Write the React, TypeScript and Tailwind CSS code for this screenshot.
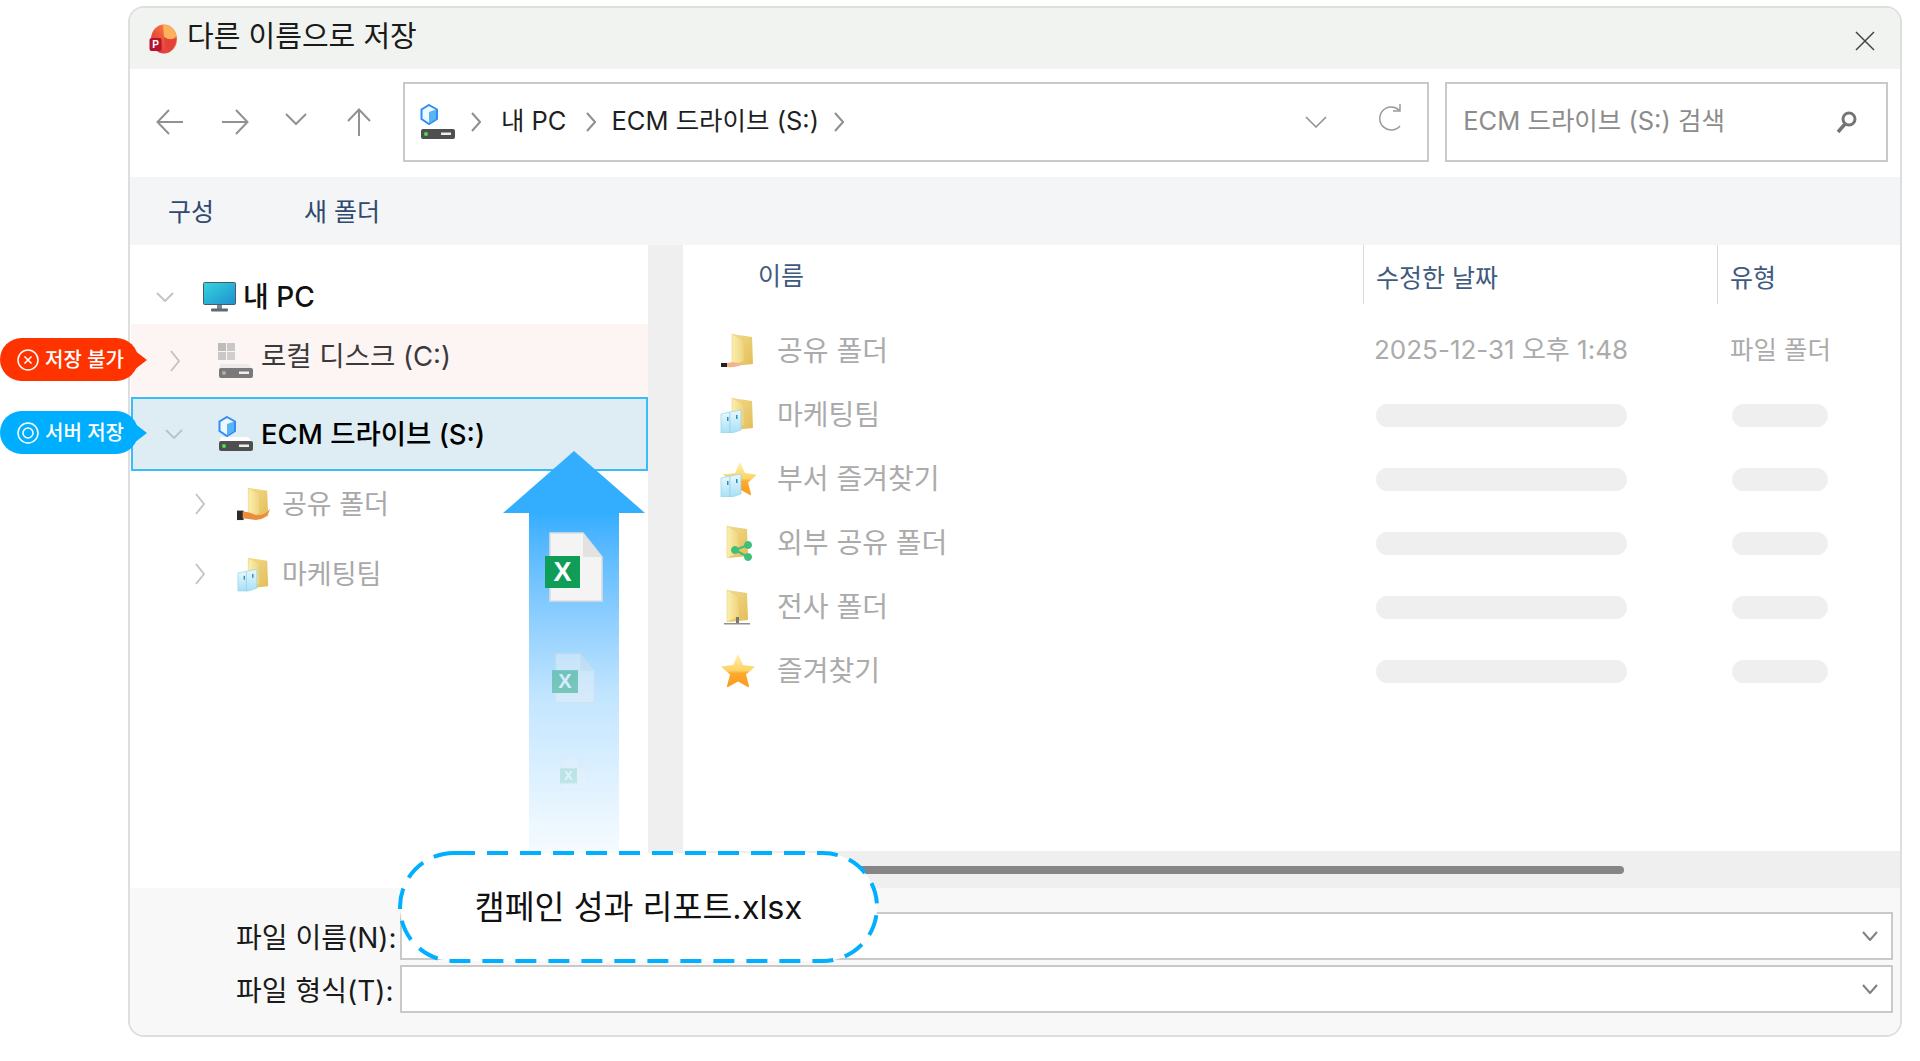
import React from 'react';

const Defs = () => (
  <svg className="absolute w-0 h-0">
    <defs>
      <linearGradient id="folderBack" x1="0" y1="0" x2="1" y2="1">
        <stop offset="0" stopColor="#f3dd8e" />
        <stop offset="1" stopColor="#e2bd57" />
      </linearGradient>
      <linearGradient id="folderFront" x1="0" y1="0" x2="1" y2="0">
        <stop offset="0" stopColor="#fbf0ae" />
        <stop offset="1" stopColor="#efd27c" />
      </linearGradient>
      <linearGradient id="star" x1="0" y1="0" x2="0" y2="1">
        <stop offset="0" stopColor="#fff3b0" />
        <stop offset="0.5" stopColor="#fdd264" />
        <stop offset="0.58" stopColor="#fdaa2e" />
        <stop offset="1" stopColor="#fb9a1c" />
      </linearGradient>
      <linearGradient id="people" x1="0" y1="0" x2="0" y2="1">
        <stop offset="0" stopColor="#eaf8fd" />
        <stop offset="1" stopColor="#a8e0f4" />
      </linearGradient>
      <linearGradient id="screen" x1="0" y1="0" x2="1" y2="1">
        <stop offset="0" stopColor="#34d6dc" />
        <stop offset="1" stopColor="#1f8fd0" />
      </linearGradient>
      <linearGradient id="ppt" x1="1" y1="0" x2="0" y2="1">
        <stop offset="0" stopColor="#fd9a3a" />
        <stop offset="0.5" stopColor="#ee5a3c" />
        <stop offset="1" stopColor="#d9203f" />
      </linearGradient>
    </defs>
  </svg>
);

const Chevron = ({ dir, w, h, color = '#b5b5b5', sw = 2, className = '' }: { dir: 'right' | 'down'; w: number; h: number; color?: string; sw?: number; className?: string }) => (
  <svg width={w} height={h} viewBox={`0 0 ${w} ${h}`} fill="none" className={className}>
    <path
      d={dir === 'right' ? `M1 1 L${w - 1} ${h / 2} L1 ${h - 1}` : `M1 1 L${w / 2} ${h - 1} L${w - 1} 1`}
      stroke={color}
      strokeWidth={sw}
    />
  </svg>
);

const PptLogo = () => (
  <svg width="28" height="30" viewBox="0 0 28 30">
    <ellipse cx="15" cy="15" rx="13" ry="14.500" fill="url(#ppt)" />
    <path d="M14 0.500 Q25 1 27.500 12 L22 16 Q17 15 15 13 Z" fill="#fcb25c" />
    <path d="M15 13 Q20 17 27.500 14 Q27 24 19 28 Q15 20 15 13 Z" fill="#e2413c" />
    <rect x="0.500" y="14" width="12" height="13" rx="2" fill="#b5122e" />
    <text x="6.500" y="24" fontSize="10" fontWeight="700" fill="#fff" textAnchor="middle" fontFamily="Liberation Sans, sans-serif">P</text>
  </svg>
);

const Drive = ({ base, led = '#4ade50' }: { base: string; led?: string }) => (
  <>
    <path d="M3 21 H30 L35 27 H1 Z" fill={base} />
    <rect x="1" y="25" width="34" height="10" rx="2" fill="#4f4f4f" />
    <circle cx="6" cy="30" r="2" fill={led} />
    <rect x="21" y="28.500" width="10" height="2.500" fill="#eee" />
  </>
);

const Hex = () => (
  <>
    <path d="M9 1 L17 5.500 V15 L9 20 L1.500 15 V5.500 Z" fill="#eef8ff" stroke="#2f8df5" strokeWidth="2" />
    <path d="M9 8 L16 5.500 V15 L9 19 Z" fill="#58b4f2" />
  </>
);

const EcmDrive = () => (
  <svg width="36" height="36" viewBox="0 0 36 36">
    <Hex />
    <Drive base="#ffffff" />
  </svg>
);

const LocalDrive = () => (
  <svg width="36" height="36" viewBox="0 0 36 36" opacity="0.75">
    <rect x="0" y="0" width="8" height="8" fill="#a8a8a8" />
    <rect x="9" y="0" width="8" height="8" fill="#b8b8b8" />
    <rect x="0" y="9" width="8" height="8" fill="#b8b8b8" />
    <rect x="9" y="9" width="8" height="8" fill="#c2c2c2" />
    <Drive base="#e6e6e6" led="#999" />
  </svg>
);

const Monitor = () => (
  <svg width="33" height="30" viewBox="0 0 33 30">
    <rect x="0.500" y="0.500" width="32" height="22" rx="1" fill="url(#screen)" stroke="#4a5a66" />
    <rect x="14" y="23" width="5" height="4" fill="#7b8790" />
    <rect x="8" y="26.500" width="17" height="3" rx="1" fill="#5f6b74" />
  </svg>
);

const FolderBody = ({ tx = 0 }: { tx?: number }) => (
  <g transform={`translate(${tx} 0)`}>
    <path d="M12 1 L32 4 L33 31 L14 33 Z" fill="url(#folderBack)" />
    <path d="M12 1 L24 7 V28 L12 33 Z" fill="url(#folderFront)" stroke="#e5c770" strokeWidth="0.500" />
  </g>
);

const People = () => (
  <g>
    <path d="M1 17 L10 15 V36 H1 Z" fill="url(#people)" stroke="#8fd3ea" strokeWidth="0.700" />
    <path d="M10 15 L21 13 V33 L12 36 H10 Z" fill="url(#people)" stroke="#8fd3ea" strokeWidth="0.700" />
    <rect x="7" y="20" width="1.500" height="4" fill="#2a8fc0" />
    <rect x="16" y="18" width="1.500" height="4" fill="#2a8fc0" />
  </g>
);

const StarShape = ({ tx = 0 }: { tx?: number }) => (
  <path
    transform={`translate(${tx} 0)`}
    d="M18 1 L23 12 L35 13.500 L26 21.500 L29 33 Q29 34.500 28 34 L18 28.500 L8 34 Q7 34.500 7 33 L10 21.500 L1 13.500 L13 12 Z"
    fill="url(#star)"
  />
);

type IconKind = 'hand' | 'team' | 'teamStar' | 'share' | 'network' | 'star';

const ListIcon = ({ kind }: { kind: IconKind }) => (
  <svg width="36" height="36" viewBox="0 0 36 36">
    {kind === 'star' && <StarShape />}
    {kind === 'teamStar' && <StarShape tx={2} />}
    {(kind === 'hand' || kind === 'team') && <FolderBody />}
    {(kind === 'share' || kind === 'network') && <FolderBody tx={-5} />}
    {kind === 'hand' && (
      <>
        <rect x="1" y="30" width="6" height="4" fill="#222" />
        <path d="M7 30 Q14 28 22 31 Q16 35 7 34 Z" fill="#f3b48c" />
      </>
    )}
    {(kind === 'team' || kind === 'teamStar') && <People />}
    {kind === 'share' && (
      <g fill="#3fbf7a" stroke="#3fbf7a">
        <path d="M15 25 L28 20 M15 25 L28 32" strokeWidth="2" fill="none" />
        <circle cx="15" cy="25" r="3.500" />
        <circle cx="28" cy="20" r="3.500" />
        <circle cx="28" cy="32" r="3.500" />
      </g>
    )}
    {kind === 'network' && (
      <>
        <rect x="4" y="34" width="26" height="1.500" fill="#8f8f8f" />
        <rect x="16" y="28" width="3" height="6" fill="#777" />
      </>
    )}
  </svg>
);

const ExcelDoc = ({ size, className = '' }: { size: 'lg' | 'md' | 'sm'; className?: string }) => {
  const dims = { lg: [58, 70], md: [43, 50], sm: [28, 33] }[size];
  return (
    <svg width={dims[0]} height={dims[1]} viewBox="0 0 58 70" preserveAspectRatio="none" className={className}>
      <path d="M5 1 H38 L57 25 V69 H5 Z" fill="#f4f4f4" stroke="#dddddd" strokeWidth="1.500" />
      <path d="M38 1 V25 H57 Z" fill="#e2e2e2" />
      <rect x="0" y="24" width="35" height="32" fill="#0f9d58" />
      <text x="17.500" y="49" fontSize="27" fontWeight="700" fill="#ffffff" textAnchor="middle" fontFamily="Liberation Sans, sans-serif">X</text>
    </svg>
  );
};

const fileRows: { name: string; icon: IconKind; date?: string; type?: string }[] = [
  { name: '공유 폴더', icon: 'hand', date: '2025-12-31 오후 1:48', type: '파일 폴더' },
  { name: '마케팅팀', icon: 'team' },
  { name: '부서 즐겨찾기', icon: 'teamStar' },
  { name: '외부 공유 폴더', icon: 'share' },
  { name: '전사 폴더', icon: 'network' },
  { name: '즐겨찾기', icon: 'star' },
];

const SubFolderIcon = ({ kind }: { kind: 'hand' | 'team' }) => (
  <svg width="34" height="36" viewBox="0 0 36 36">
    <FolderBody />
    {kind === 'hand' ? (
      <>
        <rect x="0" y="25" width="7" height="10" fill="#2c2c2c" />
        <path d="M6 26 Q16 27 20 30 Q30 30 35 23 Q33 34 20 35 L6 33 Z" fill="#e98f3c" />
      </>
    ) : (
      <People />
    )}
  </svg>
);

const App = () => {
  return (
    <div className="relative w-[1920px] h-[1061px] overflow-hidden bg-white font-['Inter','Noto_Sans_CJK_KR',sans-serif]">
      <Defs />

      {/* dialog */}
      <div className="ml-[128px] mt-[6px] w-[1774px] h-[1031px] flex flex-col border-2 border-[#dedede] rounded-[16px] overflow-hidden bg-white">
        <div className="h-[61px] shrink-0 flex items-center bg-[#f1f3f1] pl-[19px] pr-[25px]">
          <PptLogo />
          <span className="ml-[10px] text-[29px] text-[#1a1a1a] -mt-[3px]">다른 이름으로 저장</span>
          <svg width="20" height="20" viewBox="0 0 20 20" className="ml-auto mt-[4px]" fill="none" stroke="#444" strokeWidth="1.500">
            <path d="M1 1 L19 19 M19 1 L1 19" />
          </svg>
        </div>

        <div className="h-[108px] shrink-0 flex items-center pl-[26px] pr-[12px] pb-[3px]">
          <svg width="27" height="26" viewBox="0 0 27 26" fill="none" stroke="#919191" strokeWidth="2">
            <path d="M27 13 H2 M13 1 L1.500 13 L13 25" />
          </svg>
          <svg width="27" height="26" viewBox="0 0 27 26" fill="none" stroke="#919191" strokeWidth="2" className="ml-[39px]">
            <path d="M0 13 H25 M14 1 L25.500 13 L14 25" />
          </svg>
          <Chevron dir="down" w={22} h={12} color="#919191" className="ml-[36px] -mt-[6px]" />
          <svg width="24" height="28" viewBox="0 0 24 28" fill="none" stroke="#919191" strokeWidth="2" className="ml-[40px]">
            <path d="M12 28 V2 M1 13 L12 1.500 L23 13" />
          </svg>

          <div className="ml-[32px] w-[1027px] h-[80px] flex items-center border-2 border-[#c9c9c9] pl-[15px] pr-[24px]">
            <EcmDrive />
            <Chevron dir="right" w={10} h={20} color="#8f8f8f" className="ml-[15px]" />
            <span className="ml-[20px] text-[25.5px] text-[#1f1f1f]">내 PC</span>
            <Chevron dir="right" w={10} h={20} color="#8f8f8f" className="ml-[20px]" />
            <span className="ml-[15px] text-[25.5px] text-[#1f1f1f]">ECM 드라이브 (S:)</span>
            <Chevron dir="right" w={10} h={20} color="#8f8f8f" className="ml-[15px]" />
            <Chevron dir="down" w={22} h={12} color="#8f8f8f" sw={1.500} className="ml-auto" />
            <svg width="26" height="30" viewBox="0 0 26 30" fill="none" stroke="#9a9a9a" strokeWidth="1.500" className="ml-[50px] -mt-[8px]">
              <path d="M23 23 A11.500 11.500 0 1 1 22 7 M23 1 V8 H16" />
            </svg>
          </div>

          <div className="ml-[16px] w-[443px] h-[80px] flex items-center border-2 border-[#c9c9c9] pl-[16px] pr-[28px]">
            <span className="text-[25.5px] text-[#8c8c8c]">ECM 드라이브 (S:) 검색</span>
            <svg width="22" height="24" viewBox="0 0 22 24" fill="none" stroke="#757575" className="ml-auto">
              <circle cx="13" cy="9" r="6" strokeWidth="3" />
              <path d="M9 14 L2 22" strokeWidth="3.500" />
            </svg>
          </div>
        </div>

        <div className="h-[68px] shrink-0 flex items-center bg-[#f4f5f7] pl-[38px] pt-[3px] text-[25px] text-[#2f4a6d]">
          <span>구성</span>
          <span className="ml-[90px]">새 폴더</span>
        </div>

        <div className="flex-1 flex min-h-0">
          {/* tree */}
          <div className="w-[518px] shrink-0 flex flex-col">
            <div className="h-[79px] pt-[24px] flex items-center pl-[26px]">
              <Chevron dir="down" w={18} h={10} color="#c4c4c4" />
              <span className="ml-[29px]"><Monitor /></span>
              <span className="ml-[7px] text-[28px] font-medium text-[#111]">내 PC</span>
            </div>
            <div className="h-[73px] ml-[1px] flex items-center bg-[#fdf4f4] pl-[39px]">
              <Chevron dir="right" w={10} h={22} color="#c4c4c4" />
              <span className="ml-[38px] flex"><LocalDrive /></span>
              <span className="ml-[7px] -mt-[7px] text-[27.5px] text-[#3a3a3a]">로컬 디스크 (C:)</span>
            </div>
            <div className="h-[74px] ml-[1px] flex items-center bg-[#deedf4] border-2 border-[#38bdf8] pl-[32px]">
              <Chevron dir="down" w={18} h={10} color="#b9c4ca" />
              <span className="ml-[35px] flex"><EcmDrive /></span>
              <span className="ml-[7px] mt-[2px] text-[27.5px] font-medium text-black">ECM 드라이브 (S:)</span>
            </div>
            <div className="h-[66px] flex items-center pl-[65px]">
              <Chevron dir="right" w={10} h={22} color="#c4c4c4" />
              <span className="ml-[32px] flex"><SubFolderIcon kind="hand" /></span>
              <span className="ml-[11px] mt-[2px] text-[27px] text-[#a8a8a8]">공유 폴더</span>
            </div>
            <div className="h-[74px] flex items-center pl-[65px]">
              <Chevron dir="right" w={10} h={22} color="#c4c4c4" />
              <span className="ml-[32px] flex"><SubFolderIcon kind="team" /></span>
              <span className="ml-[11px] mt-[2px] text-[27px] text-[#a8a8a8]">마케팅팀</span>
            </div>
          </div>

          <div className="flex-1 flex flex-col min-w-0">
            <div className="flex-1 flex min-h-0">
              <div className="w-[35px] shrink-0 bg-[#efefef]" />
              {/* file list */}
              <div className="flex-1 min-w-0">
                <div className="grid grid-cols-[680px_354px_1fr] h-[59px] text-[25px] text-[#3f5a80]">
                  <div className="pl-[75px] pt-[13px]">이름</div>
                  <div className="border-l border-[#d9d9d9] pl-[12px] pt-[15px]">수정한 날짜</div>
                  <div className="border-l border-[#d9d9d9] pl-[12px] pt-[15px]">유형</div>
                </div>
                <div className="mt-[15px]">
                  {fileRows.map((row) => (
                    <div key={row.name} className="grid grid-cols-[691px_356px_1fr] h-[64px] items-center">
                      <div className="flex items-center pl-[37px]">
                        <ListIcon kind={row.icon} />
                        <span className="ml-[21px] text-[28px] text-[#ababab]">{row.name}</span>
                      </div>
                      {row.date ? (
                        <span className="-mt-[3px] text-[26px] text-[#ababab] whitespace-nowrap">{row.date}</span>
                      ) : (
                        <div className="w-[251px] h-[23px] ml-[2px] rounded-full bg-[#efefef]" />
                      )}
                      {row.type ? (
                        <span className="-mt-[2px] text-[25.5px] text-[#ababab]">{row.type}</span>
                      ) : (
                        <div className="w-[96px] h-[23px] ml-[2px] rounded-full bg-[#efefef]" />
                      )}
                    </div>
                  ))}
                </div>
              </div>
            </div>
            <div className="h-[37px] shrink-0 flex items-center bg-[#efefef]">
              <div className="ml-[152px] w-[824px] h-[8px] rounded-full bg-[#858585]" />
            </div>
          </div>
        </div>

        {/* file name fields */}
        <div className="h-[147px] shrink-0 bg-[#f8f8f8] pt-[24px] pr-[7px] flex flex-col gap-[5px]">
          <div className="flex items-center">
            <span className="w-[270px] shrink-0 pl-[106px] mt-[3px] text-[28px] text-[#1a1a1a] whitespace-nowrap">파일 이름(N):</span>
            <div className="flex-1 h-[48px] flex items-center justify-end bg-white border-2 border-[#c9c9c9] pr-[13px]">
              <Chevron dir="down" w={16} h={10} color="#808080" sw={2} />
            </div>
          </div>
          <div className="flex items-center">
            <span className="w-[270px] shrink-0 pl-[106px] mt-[3px] text-[28px] text-[#1a1a1a] whitespace-nowrap">파일 형식(T):</span>
            <div className="flex-1 h-[48px] flex items-center justify-end bg-white border-2 border-[#c9c9c9] pr-[13px]">
              <Chevron dir="down" w={16} h={10} color="#808080" sw={2} />
            </div>
          </div>
        </div>
      </div>

      {/* status badges */}
      <div className="absolute left-0 top-[338px] w-[138px] h-[43px] flex items-center pl-[17px] rounded-full bg-[#ff3300] text-white text-[20px] font-medium">
        <svg width="22" height="22" viewBox="0 0 22 22" fill="none" stroke="#fff" strokeWidth="1.500">
          <circle cx="11" cy="11" r="10" />
          <path d="M7.500 7.500 L14.500 14.500 M14.500 7.500 L7.500 14.500" />
        </svg>
        <span className="ml-[6px] whitespace-nowrap">저장 불가</span>
        <span className="absolute left-[134px] top-[12px] border-y-[10px] border-y-transparent border-l-[13px] border-l-[#ff3300]" />
      </div>
      <div className="absolute left-0 top-[411px] w-[138px] h-[43px] flex items-center pl-[17px] rounded-full bg-[#00aeff] text-white text-[20px] font-medium">
        <svg width="22" height="22" viewBox="0 0 22 22" fill="none" stroke="#fff" strokeWidth="1.500">
          <circle cx="11" cy="11" r="10" />
          <circle cx="11" cy="11" r="5" />
        </svg>
        <span className="ml-[6px] whitespace-nowrap">서버 저장</span>
        <span className="absolute left-[134px] top-[12px] border-y-[10px] border-y-transparent border-l-[13px] border-l-[#00aeff]" />
      </div>

      {/* upload arrow */}
      <div className="absolute left-[503px] top-[451px] w-[142px] flex flex-col items-center">
        <svg width="142" height="62" viewBox="0 0 142 62">
          <path d="M71 0 L142 62 H0 Z" fill="#33aeff" />
        </svg>
        <div className="w-[90px] h-[367px] bg-linear-to-b from-[#33aeff] via-[#c2e5ff] via-50% to-white">
          <ExcelDoc size="lg" className="ml-[16px] mt-[19px]" />
          <ExcelDoc size="md" className="ml-[23px] mt-[51px] opacity-40" />
          <ExcelDoc size="sm" className="ml-[31px] mt-[54px] opacity-15" />
        </div>
      </div>

      {/* file name callout */}
      <div className="absolute left-[398px] top-[851px] w-[481px] h-[112px] flex items-center justify-center">
        <svg width="481" height="112" viewBox="0 0 481 112" className="absolute inset-0">
          <rect x="2" y="2" width="477" height="108" rx="54" fill="#ffffff" stroke="#00b0ff" strokeWidth="4" strokeDasharray="21 12" />
        </svg>
        <span className="relative text-[32.5px] text-[#111] mt-[2px] whitespace-nowrap">캠페인 성과 리포트.xlsx</span>
      </div>
    </div>
  );
};

export default App;
